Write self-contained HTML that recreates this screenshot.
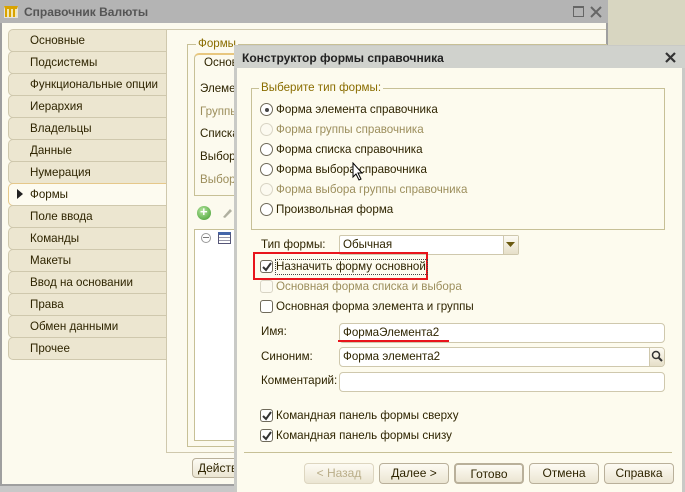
<!DOCTYPE html>
<html><head><meta charset="utf-8"><style>
*{box-sizing:border-box;margin:0;padding:0}
body{width:685px;height:492px;overflow:hidden;background:#d8d6c1;font-family:"Liberation Sans",sans-serif;font-size:11.6px;color:#2e2400;position:relative}
.a{position:absolute}
.t{position:absolute;white-space:nowrap;line-height:14px}
.tab{position:absolute;left:8px;width:159px;height:23px;background:#ece6d0;border:1px solid #cfc8ad;border-right:none;border-radius:5px 0 0 5px;padding-left:21px;line-height:21px}
.rad{position:absolute;width:13px;height:13px;border:1px solid #6f6a5a;border-radius:50%;background:#fff}
.rad.d{border-color:#d8d4c4;background:#fcfaf0}
.cb{position:absolute;width:13px;height:13px;border:1px solid #6f6a5a;border-radius:3px;background:#fff}
.cb.d{border-color:#d8d4c4;background:#fcfaf0}
.cb svg{position:absolute;left:1px;top:1px}
.dis{color:#9c8e5c}
.fld{position:absolute;height:20px;background:#fff;border:1px solid #cfc8ad;border-radius:4px;padding-left:3px;line-height:18px}
.btn{position:absolute;top:463px;width:70px;height:21px;border:1px solid #b9b09a;border-radius:4px;background:linear-gradient(#fdfbf3,#ebe5d2);text-align:center;line-height:19px;font-size:12px}
</style></head><body>
<div class="a" style="left:0;top:0;width:608px;height:486px;background:#fcfaee;border:2px solid #9f9f9f;border-top:none"></div>
<div class="a" style="left:0;top:0;width:608px;height:23px;background:#b4b4b4"></div>
<div class="a" style="left:4px;top:6px;width:14px;height:12px;border:1px solid #e0e0e0;background:repeating-linear-gradient(90deg,#d9a300 0 2px,#f4e7b0 2px 4px);border-top:3px solid #d9a300"></div>
<div class="t" style="left:24px;top:5px;font-weight:bold;font-size:12px;color:#555">Справочник Валюты</div>
<div class="a" style="left:573px;top:6px;width:11px;height:11px;border:1.5px solid #666;border-top-width:2px"></div>
<svg class="a" style="left:590px;top:6px" width="12" height="12"><path d="M1 1L11 11M11 1L1 11" stroke="#666" stroke-width="2"/></svg>
<div class="a" style="left:0;top:486px;width:608px;height:6px;background:#c8c8c8"></div>
<div class="tab" style="top:29px">Основные</div>
<div class="tab" style="top:51px">Подсистемы</div>
<div class="tab" style="top:73px">Функциональные опции</div>
<div class="tab" style="top:95px">Иерархия</div>
<div class="tab" style="top:117px">Владельцы</div>
<div class="tab" style="top:139px">Данные</div>
<div class="tab" style="top:161px">Нумерация</div>
<div class="tab" style="top:183px;background:#fdfbf0;border-color:#e6c88a">Формы</div>
<svg class="a" style="left:17px;top:189px" width="6" height="10"><path d="M0 0L6 5L0 10Z" fill="#222"/></svg>
<div class="tab" style="top:205px">Поле ввода</div>
<div class="tab" style="top:227px">Команды</div>
<div class="tab" style="top:249px">Макеты</div>
<div class="tab" style="top:271px">Ввод на основании</div>
<div class="tab" style="top:293px">Права</div>
<div class="tab" style="top:315px">Обмен данными</div>
<div class="tab" style="top:337px">Прочее</div>
<div class="a" style="left:166px;top:29px;width:440px;height:424px;border-left:1px solid #cfc8ad;border-bottom:1px solid #cfc8ad;border-top:1px solid #cfc8ad"></div>
<div class="a" style="left:187px;top:44px;width:420px;height:403px;border:1px solid #c7c096;border-right:none"></div>
<div class="t" style="left:196px;top:37px;background:#fcfaee;color:#8a6d00;padding:0 2px">Формы</div>
<div class="a" style="left:194px;top:53px;width:420px;height:143px;border:1px solid #c7c096;border-radius:5px 0 0 0;border-top:2px solid #e8c77f"></div>
<div class="t" style="left:204px;top:56px">Основные</div>
<div class="t" style="left:200px;top:82px">Элемент</div>
<div class="t dis" style="left:200px;top:105px">Группы</div>
<div class="t" style="left:200px;top:127px">Списка</div>
<div class="t" style="left:200px;top:150px">Выбора</div>
<div class="t dis" style="left:200px;top:173px">Выбора</div>
<div class="a" style="left:197px;top:206px;width:14px;height:14px;border-radius:50%;background:radial-gradient(circle at 40% 35%,#b6e6a0,#3d9a2b);"></div>
<div class="t" style="left:200px;top:205px;color:#fff;font-weight:bold;font-size:13px">+</div>
<svg class="a" style="left:221px;top:207px" width="12" height="12"><path d="M2 10L9 2L11 4L4 11Z" fill="#b0b0a0"/></svg>
<div class="a" style="left:194px;top:229px;width:420px;height:212px;background:#fff;border:1px solid #c7c096"></div>
<div class="a" style="left:201px;top:233px;width:10px;height:10px;border:1px solid #999;border-radius:50%"></div>
<div class="a" style="left:203px;top:237px;width:6px;height:1px;background:#777"></div>
<div class="a" style="left:218px;top:232px;width:13px;height:12px;border:1px solid #557;background:repeating-linear-gradient(#fff 0 2px,#99a 2px 3px);border-top:3px solid #46a"></div>
<div class="a" style="left:192px;top:458px;width:60px;height:20px;border:1px solid #b9b09a;border-radius:4px;background:linear-gradient(#fdfbf3,#ebe5d2)"></div>
<div class="t" style="left:198px;top:461px;font-size:12px">Действия</div>
<div class="a" style="left:234px;top:45px;width:451px;height:447px;background:#fdfbee;border:3px solid #c9cac6;border-bottom:none"></div>
<div class="a" style="left:234px;top:46px;width:451px;height:22px;background:#d0d2cd"></div>
<div class="t" style="left:242px;top:51px;font-weight:bold;font-size:12px;color:#222">Конструктор формы справочника</div>
<svg class="a" style="left:665px;top:52px" width="11" height="11"><path d="M1 1L10 10M10 1L1 10" stroke="#333" stroke-width="2.2"/></svg>
<div class="a" style="left:251px;top:88px;width:414px;height:142px;border:1px solid #c7c096"></div>
<div class="t" style="left:259px;top:81px;background:#fdfbee;color:#8a6d00;padding:0 2px">Выберите тип формы:</div>
<div class="rad" style="left:260px;top:103px"></div><div class="a" style="left:265px;top:108px;width:4px;height:4px;border-radius:50%;background:#444"></div>
<div class="t" style="left:276px;top:103px">Форма элемента справочника</div>
<div class="rad d" style="left:260px;top:123px"></div><div class="t dis" style="left:276px;top:123px">Форма группы справочника</div>
<div class="rad" style="left:260px;top:143px"></div><div class="t" style="left:276px;top:143px">Форма списка справочника</div>
<div class="rad" style="left:260px;top:163px"></div><div class="t" style="left:276px;top:163px">Форма выбора справочника</div>
<div class="rad d" style="left:260px;top:183px"></div><div class="t dis" style="left:276px;top:183px">Форма выбора группы справочника</div>
<div class="rad" style="left:260px;top:203px"></div><div class="t" style="left:276px;top:203px">Произвольная форма</div>
<svg class="a" style="left:352px;top:162px" width="12" height="19"><path d="M1 1L1 15L4 12L7 18L9 17L6 11L10 11Z" fill="#fff" stroke="#000"/></svg>
<div class="t" style="left:261px;top:238px">Тип формы:</div>
<div class="fld" style="left:339px;top:235px;width:180px;border-radius:2px">Обычная</div>
<div class="a" style="left:503px;top:236px;width:15px;height:18px;background:linear-gradient(#fdfbf3,#e6dfc8);border-left:1px solid #cfc8ad"></div>
<svg class="a" style="left:506px;top:242px" width="9" height="5"><path d="M0 0H9L4.5 5Z" fill="#6b5a10"/></svg>
<div class="a" style="left:253px;top:252px;width:175px;height:28px;border:2px solid #e8141c"></div>
<div class="cb" style="left:260px;top:260px"><svg width="10" height="10"><path d="M1 5L4 8L9 1" stroke="#333" stroke-width="2" fill="none"/></svg></div>
<div class="t" style="left:275px;top:259px;border:1px dotted #444;padding-right:1px">Назначить форму основной</div>
<div class="cb d" style="left:260px;top:280px"></div><div class="t dis" style="left:276px;top:280px">Основная форма списка и выбора</div>
<div class="cb" style="left:260px;top:300px"></div><div class="t" style="left:276px;top:300px">Основная форма элемента и группы</div>
<div class="t" style="left:261px;top:325px">Имя:</div>
<div class="fld" style="left:339px;top:323px;width:326px">ФормаЭлемента2</div>
<div class="a" style="left:338px;top:340px;width:111px;height:2px;background:#e8141c"></div>
<div class="t" style="left:261px;top:350px">Синоним:</div>
<div class="fld" style="left:339px;top:347px;width:326px">Форма элемента2</div>
<div class="a" style="left:649px;top:348px;width:15px;height:18px;background:linear-gradient(#fdfbf3,#e6dfc8);border-left:1px solid #cfc8ad;border-radius:0 3px 3px 0"></div>
<svg class="a" style="left:651px;top:350px" width="12" height="12"><circle cx="5" cy="5" r="3.5" stroke="#333" stroke-width="1.5" fill="none"/><path d="M7.5 7.5L11 11" stroke="#333" stroke-width="2"/></svg>
<div class="t" style="left:261px;top:374px">Комментарий:</div>
<div class="fld" style="left:339px;top:372px;width:326px"></div>
<div class="cb" style="left:260px;top:409px"><svg width="10" height="10"><path d="M1 5L4 8L9 1" stroke="#333" stroke-width="2" fill="none"/></svg></div>
<div class="t" style="left:276px;top:409px">Командная панель формы сверху</div>
<div class="cb" style="left:260px;top:429px"><svg width="10" height="10"><path d="M1 5L4 8L9 1" stroke="#333" stroke-width="2" fill="none"/></svg></div>
<div class="t" style="left:276px;top:429px">Командная панель формы снизу</div>
<div class="a" style="left:244px;top:452px;width:428px;height:1px;background:#c7c096"></div>
<div class="btn dis" style="left:304px;border-color:#ddd6c0;color:#b9ad88">&lt; Назад</div>
<div class="btn" style="left:379px">Далее &gt;</div>
<div class="btn" style="left:454px;border:2px solid #b9b09a">Готово</div>
<div class="btn" style="left:529px">Отмена</div>
<div class="btn" style="left:604px">Справка</div>
</body></html>
